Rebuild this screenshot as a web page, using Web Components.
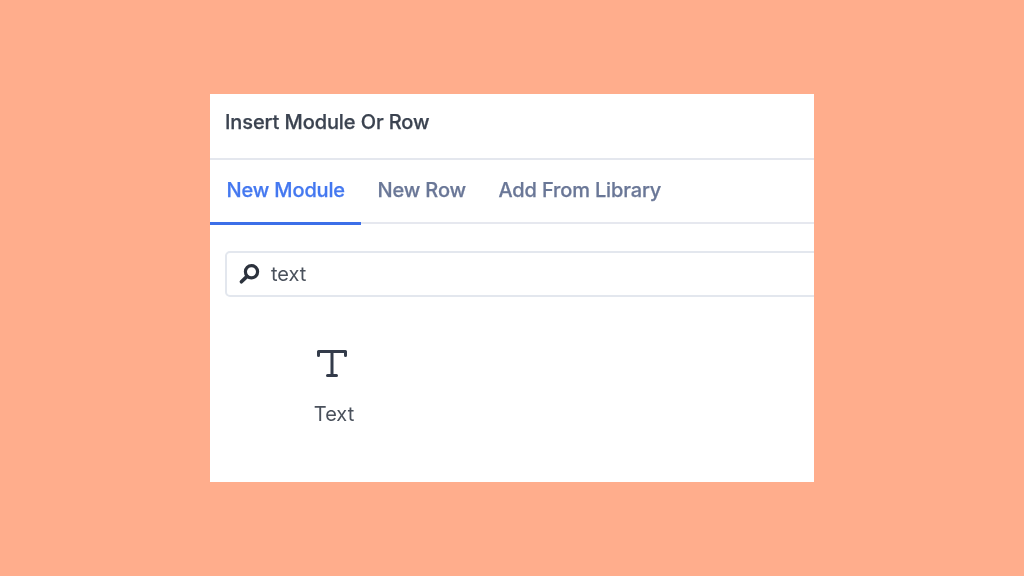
<!DOCTYPE html>
<html><head><meta charset="utf-8">
<style>
html,body{margin:0;height:100%}
body{width:1024px;height:576px;overflow:hidden;background:#ffad8c;display:flex;align-items:center;justify-content:center;font-family:Inter,"Liberation Sans",sans-serif}
</style></head><body>
<insert-panel>
  <span slot="title">Insert Module Or Row</span>
  <panel-tab slot="tabs" active>New Module</panel-tab>
  <panel-tab slot="tabs">New Row</panel-tab>
  <panel-tab slot="tabs">Add From Library</panel-tab>
  <search-box slot="search">text</search-box>
  <module-item slot="items">Text</module-item>
</insert-panel>
<script>
function def(name, html){
  customElements.define(name, class extends HTMLElement{
    constructor(){super();this.attachShadow({mode:'open'}).innerHTML=html;}
  });
}
def('insert-panel',`<style>
:host{display:flex;flex-direction:column;width:604px;height:388px;background:#fff;overflow:hidden}
header{height:66px;box-sizing:border-box;border-bottom:2px solid #e4e7ee;padding:0 0 9px 15px;display:flex;align-items:center;font-size:20px;font-weight:500;color:#3b4350;letter-spacing:-.1px;-webkit-text-stroke:.25px #3b4350;filter:blur(.35px)}
nav{height:64px;box-sizing:border-box;border-bottom:2px solid #e6e8ef;display:flex}
.s{padding:27px 0 0 15px;margin-right:-60px}
.i{padding:52px 0 0 84px}
</style>
<header><slot name="title"></slot></header>
<nav><slot name="tabs"></slot></nav>
<div class="s"><slot name="search"></slot></div>
<div class="i"><slot name="items"></slot></div>`);
def('panel-tab',`<style>
:host{display:flex;align-items:center;box-sizing:border-box;height:65px;padding:0 16px 3px 16.5px;border-bottom:3.5px solid transparent;font-size:20px;font-weight:500;color:#6a7797;letter-spacing:-.15px;-webkit-text-stroke:.25px currentColor;white-space:nowrap}
:host([active]){color:#4478f0;border-bottom-color:#3c6fe8}
span{filter:blur(.35px)}
</style><span><slot></slot></span>`);
def('search-box',`<style>
:host{display:flex;align-items:center;gap:11px;box-sizing:border-box;height:46px;width:640px;border:2px solid #e3e7ee;border-radius:5px;padding:0 0 1px 11px;font-size:20px;color:#4a515c;background:#fff}
svg{display:block;flex:none}
span{filter:blur(.35px)}
</style><svg width="22" height="22" viewBox="0 0 22 22"><circle cx="13.5" cy="8.8" r="6.1" fill="none" stroke="#2c323d" stroke-width="3.2"/><path d="M8.8 13.6 3.4 18.8" stroke="#2c323d" stroke-width="3.6" stroke-linecap="round"/></svg><span><slot></slot></span>`);
def('module-item',`<style>
:host{display:flex;flex-direction:column;align-items:center;width:80px;font-size:20px;color:#4a515c}
svg{display:block;margin:0 5px 24px 0;filter:blur(.3px)}
span{filter:blur(.35px)}
</style><svg width="32" height="29" viewBox="0 0 32 29"><path d="M2.5 6.5V2.5H29.5V6.5M16 2.5V26.5M11.5 26.5H20.5" fill="none" stroke="#333b4a" stroke-width="3" stroke-linecap="round" stroke-linejoin="round"/></svg><span><slot></slot></span>`);
</script>
</body></html>
